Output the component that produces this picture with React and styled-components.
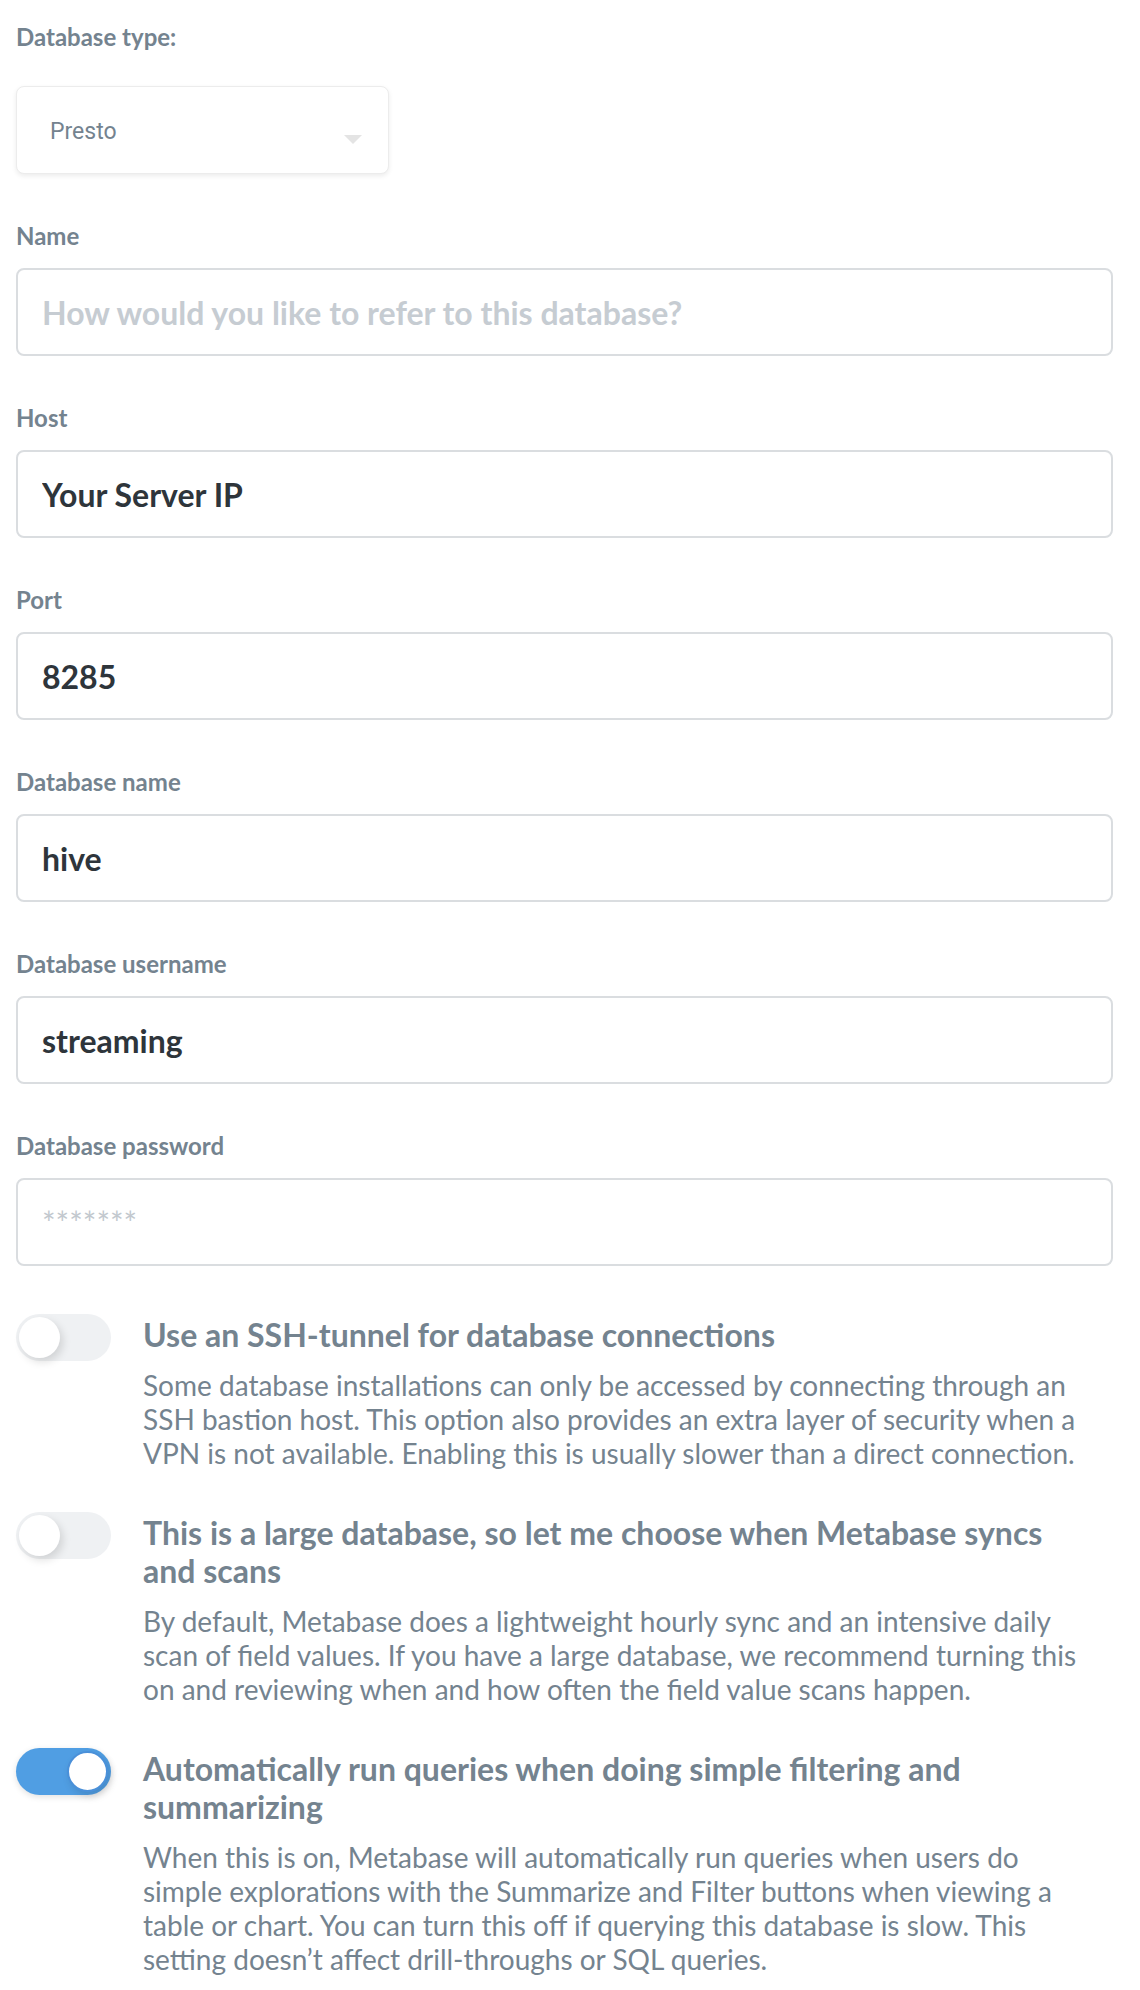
import styled, { createGlobalStyle } from 'styled-components';

const GlobalStyle = createGlobalStyle`
  html, body {
    margin: 0;
    padding: 0;
    background: #fff;
  }
  body {
    font-family: Lato, "Noto Sans", sans-serif;
  }
`;

const Page = styled.div`
  width: 1140px;
  box-sizing: border-box;
  padding: 23px 27px 0 16px;
`;

const Field = styled.div`
  display: flex;
  flex-direction: column;
  margin-bottom: ${props => props.$gap || 48}px;
`;

const Label = styled.label`
  font-size: 24px;
  line-height: 28px;
  font-weight: 700;
  color: #74838f;
  margin-bottom: ${props => props.$gap || 18}px;
`;

const SelectBox = styled.div`
  width: 373px;
  height: 88px;
  box-sizing: border-box;
  display: flex;
  align-items: center;
  justify-content: space-between;
  padding: 0 26px 0 33px;
  border: 1px solid #ececec;
  border-radius: 8px;
  box-shadow: 0 2px 5px rgba(0, 0, 0, 0.08);
  background: #fff;
`;

const SelectValue = styled.span`
  font-family: Roboto, "Liberation Sans", sans-serif;
  font-size: 23px;
  color: #74838f;
  margin-top: 2px;
`;

const Caret = styled.span`
  width: 0;
  height: 0;
  margin-top: 18px;
  border-left: 9px solid transparent;
  border-right: 9px solid transparent;
  border-top: 9px solid #e4e4e4;
`;

const Input = styled.input`
  height: 88px;
  box-sizing: border-box;
  width: 100%;
  padding: 0 24px;
  border: 2px solid #dadde0;
  border-radius: 8px;
  font-family: Lato, sans-serif;
  font-size: 32px;
  font-weight: 700;
  color: #2e353b;
  background: #fff;
  outline: none;

  &::placeholder {
    color: #c6ccd2;
  }
`;

const PasswordInput = styled(Input)`
  &::placeholder {
    font-weight: 400;
    color: #c2c8ce;
  }
`;

const Options = styled.div`
  display: flex;
  flex-direction: column;
  gap: 44px;
`;

const OptionRow = styled.div`
  display: flex;
  align-items: flex-start;
  gap: 32px;
`;

const Toggle = styled.div`
  position: relative;
  flex: none;
  width: 95px;
  height: 47px;
  box-sizing: border-box;
  border-radius: 24px;
  background: ${props => (props.$on ? '#509ee3' : '#eff1f3')};
  box-shadow: ${props => (props.$on ? '0 2px 6px rgba(0,0,0,0.12)' : 'none')};
  margin-top: -2px;

  &::after {
    content: '';
    position: absolute;
    top: 3px;
    left: ${props => (props.$on ? '51px' : '3px')};
    width: 41px;
    height: 41px;
    box-sizing: border-box;
    border-radius: 50%;
    background: #fff;
    border: ${props => (props.$on ? '2px solid #4a90d9' : 'none')};
    box-shadow: 3px 4px 8px rgba(0, 0, 0, 0.13);
  }
`;

const OptionText = styled.div`
  max-width: 945px;
  display: flex;
  flex-direction: column;
  gap: 14px;
`;

const OptionTitle = styled.div`
  font-size: 32px;
  line-height: 38px;
  font-weight: 700;
  color: #74838f;
`;

const OptionDescription = styled.div`
  font-size: 28px;
  line-height: 34px;
  font-weight: 400;
  color: #74838f;
`;

const fields = [
  { label: 'Name', placeholder: 'How would you like to refer to this database?' },
  { label: 'Host', value: 'Your Server IP' },
  { label: 'Port', value: '8285' },
  { label: 'Database name', value: 'hive' },
  { label: 'Database username', value: 'streaming' },
];

const options = [
  {
    title: 'Use an SSH-tunnel for database connections',
    description:
      'Some database installations can only be accessed by connecting through an SSH bastion host. This option also provides an extra layer of security when a VPN is not available. Enabling this is usually slower than a direct connection.',
    on: false,
  },
  {
    title: 'This is a large database, so let me choose when Metabase syncs and scans',
    description:
      'By default, Metabase does a lightweight hourly sync and an intensive daily scan of field values. If you have a large database, we recommend turning this on and reviewing when and how often the field value scans happen.',
    on: false,
  },
  {
    title: 'Automatically run queries when doing simple filtering and summarizing',
    description:
      'When this is on, Metabase will automatically run queries when users do simple explorations with the Summarize and Filter buttons when viewing a table or chart. You can turn this off if querying this database is slow. This setting doesn\u2019t affect drill-throughs or SQL queries.',
    on: true,
  },
];

export default function App() {
  return (
    <>
      <GlobalStyle />
      <Page>
        <Field>
          <Label $gap={35}>Database type:</Label>
          <SelectBox>
            <SelectValue>Presto</SelectValue>
            <Caret />
          </SelectBox>
        </Field>

        {fields.map(field => (
          <Field key={field.label}>
            <Label>{field.label}</Label>
            <Input
              type="text"
              placeholder={field.placeholder}
              defaultValue={field.value}
            />
          </Field>
        ))}

        <Field $gap={50}>
          <Label>Database password</Label>
          <PasswordInput type="password" placeholder="*******" />
        </Field>

        <Options>
          {options.map(option => (
            <OptionRow key={option.title}>
              <Toggle $on={option.on} />
              <OptionText>
                <OptionTitle>{option.title}</OptionTitle>
                <OptionDescription>{option.description}</OptionDescription>
              </OptionText>
            </OptionRow>
          ))}
        </Options>
      </Page>
    </>
  );
}
